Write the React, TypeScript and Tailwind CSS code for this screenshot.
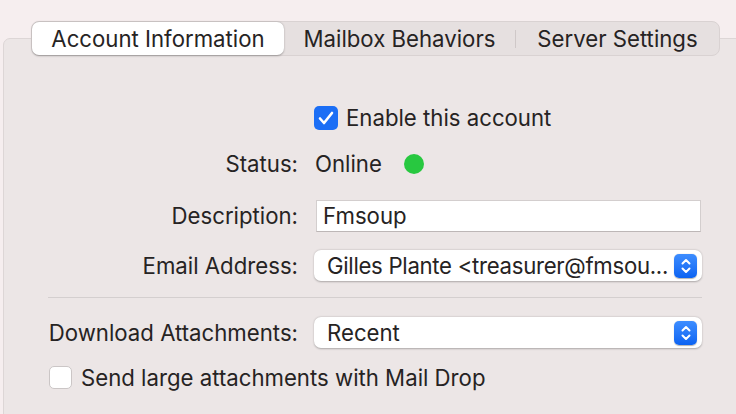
import React from 'react'

const font = { fontFamily: 'Inter, "Liberation Sans", Arial, sans-serif' }

function Stepper() {
  return (
    <span className="flex h-[24px] w-[23px] shrink-0 items-center justify-center rounded-[5px] bg-gradient-to-b from-[#3d8dff] to-[#0b63f2] shadow-[0_0.5px_1px_rgba(0,0,0,0.3)]">
      <svg width="10" height="16" viewBox="0 0 10 16" fill="none" stroke="white" strokeWidth="2" strokeLinecap="round" strokeLinejoin="round">
        <path d="M1.5 5.5 L5 2 L8.5 5.5" />
        <path d="M1.5 10.5 L5 14 L8.5 10.5" />
      </svg>
    </span>
  )
}

function Popup({ value, tight = false }: { value: string; tight?: boolean }) {
  return (
    <div className="flex h-[31px] w-[388px] items-center justify-between rounded-[7px] bg-white pl-[13px] pr-[5px] shadow-[0_0.5px_2px_rgba(0,0,0,0.28)]">
      <span className={`whitespace-nowrap ${tight ? 'tracking-[-0.3px]' : ''}`}>{value}</span>
      <Stepper />
    </div>
  )
}

function Row({ label, children, className = '' }: { label: string; children: React.ReactNode; className?: string }) {
  return (
    <div className={`flex items-center ${className}`}>
      <div className="w-[250px] shrink-0 text-right">{label}</div>
      <div className="ml-[16px] flex items-center">{children}</div>
    </div>
  )
}

export default function App() {
  const tabs = [
    { label: 'Account Information', w: 'w-[252px]', active: true },
    { label: 'Mailbox Behaviors', w: 'w-[231px]', active: false },
    { label: 'Server Settings', w: 'w-[204px]', active: false },
  ]

  return (
    <div className="h-[414px] w-[736px] overflow-hidden bg-[#f6eeef] text-[22.2px] text-[#262323]" style={font}>
      {/* Tabs */}
      <div className="relative z-10 ml-[31px] mt-[21px] flex h-[35px] w-[689px] items-center rounded-[8px] border border-[#d9d2d2] bg-[#e6e0e0]">
        {tabs.map((t, i) => (
          <div key={t.label} className={`flex h-full items-center ${t.w}`}>
            {i === 2 && <span className="h-[18px] w-px bg-[#cfc8c8]" />}
            <div
              className={`flex h-[33px] flex-1 items-center justify-center ${
                t.active ? 'rounded-[7px] bg-white shadow-[0_0.5px_2px_rgba(0,0,0,0.3)]' : ''
              }`}
            >
              {t.label}
            </div>
          </div>
        ))}
      </div>

      {/* Panel */}
      <div className="-mt-[18px] ml-[3px] h-[420px] w-[760px] rounded-[7px] border border-[#ddd6d6] bg-[#ece6e6] pl-[44px] pt-[65px]">
        <div className="flex h-[28px] items-center pl-[266px]">
          <span className="flex h-[24px] w-[24px] items-center justify-center rounded-[5px] bg-[#1b6ef5]">
            <svg width="16" height="14" viewBox="0 0 16 14" fill="none" stroke="white" strokeWidth="2.6" strokeLinecap="round" strokeLinejoin="round">
              <path d="M2 7.5 L6 12 L14 2" />
            </svg>
          </span>
          <span className="ml-[8px]">Enable this account</span>
        </div>

        <Row label="Status:" className="mt-[18px] h-[28px]">
          <span className="ml-[1px]">Online</span>
          <span className="ml-[22px] h-[20px] w-[20px] rounded-full bg-[#28c840]" />
        </Row>

        <Row label="Description:" className="mt-[22px] h-[32px]">
          <div className="ml-[2px] flex h-[32px] w-[385px] items-center border border-[#d3cece] border-b-[#bdb7b7] bg-white pl-[6px]">
            Fmsoup
          </div>
        </Row>

        <Row label="Email Address:" className="mt-[18px] h-[31px]">
          <Popup value="Gilles Plante <treasurer@fmsou..." tight />
        </Row>

        <div className="mt-[16px] h-px w-[654px] bg-[#d4cfcf]" />

        <Row label="Download Attachments:" className="mt-[19px] h-[31px]">
          <Popup value="Recent" />
        </Row>

        <div className="mt-[18px] flex h-[23px] items-center pl-[1px]">
          <span className="h-[23px] w-[23px] rounded-[5px] border border-[#cbc6c6] bg-white" />
          <span className="ml-[9px]">Send large attachments with Mail Drop</span>
        </div>
      </div>
    </div>
  )
}
